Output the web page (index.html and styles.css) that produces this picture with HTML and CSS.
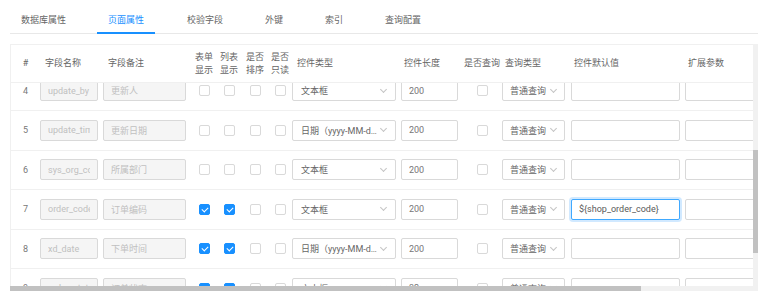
FILE: index.html
```html
<!DOCTYPE html>
<html lang="zh-CN">
<head>
  <meta charset="UTF-8">
  <meta name="viewport" content="width=device-width, initial-scale=1.0">
  <title>页面属性</title>
  <link rel="stylesheet" href="styles.css">
</head>
<body>
  <div class="page">
    <!-- Tabs -->
    <div class="tabs">
      <div class="tab">数据库属性</div>
      <div class="tab active">页面属性</div>
      <div class="tab">校验字段</div>
      <div class="tab">外键</div>
      <div class="tab">索引</div>
      <div class="tab">查询配置</div>
    </div>

    <div class="grid-box">
      <div class="grid-main">
        <!-- Header -->
        <div class="thead">
          <div class="row head">
            <div class="th center">#</div>
            <div class="th">字段名称</div>
            <div class="th">字段备注</div>
            <div class="th center">表单<br>显示</div>
            <div class="th center">列表<br>显示</div>
            <div class="th center">是否<br>排序</div>
            <div class="th center">是否<br>只读</div>
            <div class="th">控件类型</div>
            <div class="th tight">控件长度</div>
            <div class="th center">是否查询</div>
            <div class="th tight">查询类型</div>
            <div class="th tight">控件默认值</div>
            <div class="th tight">扩展参数</div>
          </div>
        </div>

        <!-- Rows -->
        <div class="tbody">
          <div class="rows">
            <div class="row">
              <div class="num">4</div>
              <div><input class="input name" value="update_by" disabled></div>
              <div><input class="input remark" value="更新人" disabled></div>
              <div class="center"><span class="cb"></span></div>
              <div class="center"><span class="cb"></span></div>
              <div class="center"><span class="cb"></span></div>
              <div class="center"><span class="cb"></span></div>
              <div><div class="select type"><span class="val">文本框</span></div></div>
              <div><input class="input len" value="200"></div>
              <div class="center"><span class="cb"></span></div>
              <div><div class="select query"><span class="val">普通查询</span></div></div>
              <div><input class="input wide" value=""></div>
              <div><input class="input wide" value=""></div>
            </div>

            <div class="row">
              <div class="num">5</div>
              <div><input class="input name" value="update_time" disabled></div>
              <div><input class="input remark" value="更新日期" disabled></div>
              <div class="center"><span class="cb"></span></div>
              <div class="center"><span class="cb"></span></div>
              <div class="center"><span class="cb"></span></div>
              <div class="center"><span class="cb"></span></div>
              <div><div class="select type"><span class="val">日期（yyyy-MM-dd）</span></div></div>
              <div><input class="input len" value="200"></div>
              <div class="center"><span class="cb"></span></div>
              <div><div class="select query"><span class="val">普通查询</span></div></div>
              <div><input class="input wide" value=""></div>
              <div><input class="input wide" value=""></div>
            </div>

            <div class="row">
              <div class="num">6</div>
              <div><input class="input name" value="sys_org_code" disabled></div>
              <div><input class="input remark" value="所属部门" disabled></div>
              <div class="center"><span class="cb"></span></div>
              <div class="center"><span class="cb"></span></div>
              <div class="center"><span class="cb"></span></div>
              <div class="center"><span class="cb"></span></div>
              <div><div class="select type"><span class="val">文本框</span></div></div>
              <div><input class="input len" value="200"></div>
              <div class="center"><span class="cb"></span></div>
              <div><div class="select query"><span class="val">普通查询</span></div></div>
              <div><input class="input wide" value=""></div>
              <div><input class="input wide" value=""></div>
            </div>

            <div class="row">
              <div class="num">7</div>
              <div><input class="input name" value="order_code" disabled></div>
              <div><input class="input remark" value="订单编码" disabled></div>
              <div class="center"><span class="cb checked"></span></div>
              <div class="center"><span class="cb checked"></span></div>
              <div class="center"><span class="cb"></span></div>
              <div class="center"><span class="cb"></span></div>
              <div><div class="select type"><span class="val">文本框</span></div></div>
              <div><input class="input len" value="200"></div>
              <div class="center"><span class="cb"></span></div>
              <div><div class="select query"><span class="val">普通查询</span></div></div>
              <div><input class="input wide focused" value="${shop_order_code}"></div>
              <div><input class="input wide" value=""></div>
            </div>

            <div class="row">
              <div class="num">8</div>
              <div><input class="input name" value="xd_date" disabled></div>
              <div><input class="input remark" value="下单时间" disabled></div>
              <div class="center"><span class="cb checked"></span></div>
              <div class="center"><span class="cb checked"></span></div>
              <div class="center"><span class="cb"></span></div>
              <div class="center"><span class="cb"></span></div>
              <div><div class="select type"><span class="val">日期（yyyy-MM-dd）</span></div></div>
              <div><input class="input len" value="200"></div>
              <div class="center"><span class="cb"></span></div>
              <div><div class="select query"><span class="val">普通查询</span></div></div>
              <div><input class="input wide" value=""></div>
              <div><input class="input wide" value=""></div>
            </div>

            <div class="row">
              <div class="num">9</div>
              <div><input class="input name" value="order_status" disabled></div>
              <div><input class="input remark" value="订单状态" disabled></div>
              <div class="center"><span class="cb checked"></span></div>
              <div class="center"><span class="cb checked"></span></div>
              <div class="center"><span class="cb"></span></div>
              <div class="center"><span class="cb"></span></div>
              <div><div class="select type"><span class="val">文本框</span></div></div>
              <div><input class="input len" value="32"></div>
              <div class="center"><span class="cb"></span></div>
              <div><div class="select query"><span class="val">普通查询</span></div></div>
              <div><input class="input wide" value=""></div>
              <div><input class="input wide" value=""></div>
            </div>
          </div>
        </div>

        <!-- Horizontal scrollbar -->
        <div class="hbar"><div class="hthumb"></div></div>
      </div>

      <!-- Vertical scrollbar -->
      <div class="vbar"><div class="vthumb"></div></div>
    </div>
  </div>
</body>
</html>
```

FILE: styles.css
```css
* {
  box-sizing: border-box;
}

body {
  margin: 0;
  background-color: #fff;
  color: #666;
  font-family: Roboto, "Noto Sans CJK SC", sans-serif;
  font-size: 9px;
}

.page {
  padding: 0 4px 0 10px;
}

/* Tabs */
.tabs {
  display: flex;
  padding-left: 1px;
  border-bottom: 1px solid #e8e8e8;
}

.tab {
  padding: 14px 10px 6px;
  margin-right: 22px;
  margin-bottom: -1px;
  line-height: 12px;
  border-bottom: 2px solid transparent;
  color: #666;
}

.tab:first-child {
  margin-right: 21px;
}

.tab.active {
  padding: 14px 11px 6px;
  color: #1890ff;
  border-bottom-color: #1890ff;
}

/* Grid */
.grid-box {
  display: flex;
  margin-top: 10px;
}

.grid-main {
  flex: 1;
  min-width: 0;
}

.thead,
.tbody {
  border-left: 1px solid #f0f0f0;
  overflow: hidden;
}

.thead {
  height: 39px;
  border-top: 1px solid #f0f0f0;
  border-bottom: 1px solid #f0f0f0;
}

.tbody {
  height: 203px;
}

.rows {
  margin-top: -11.5px;
}

.row {
  display: grid;
  grid-template-columns: 29px 63px 89px 24px 26px 26px 24px 109px 61px 40px 69px 114px 120px;
  align-items: center;
  height: 39.5px;
  border-bottom: 1px solid #f0f0f0;
}

.row.head {
  height: 37px;
  border-bottom: none;
}

.th {
  padding-left: 5px;
  line-height: 13px;
  white-space: nowrap;
  color: #666;
}

.th.tight {
  padding-left: 3px;
}

.center {
  display: flex;
  justify-content: center;
  text-align: center;
  padding-left: 0;
}

.num {
  text-align: center;
  color: #777;
}

/* Controls */
.input {
  display: block;
  height: 21px;
  padding: 0 7px;
  border: 1px solid #d9d9d9;
  border-radius: 2px;
  background-color: #fff;
  color: #777;
  font: inherit;
  outline: none;
}

.input:disabled {
  background-color: #f5f5f5;
  color: #c0c0c0;
}

.input.name {
  width: 58px;
}

.input.remark {
  width: 83px;
}

.input.len {
  width: 57px;
}

.input.wide {
  width: 109px;
}

.input.focused {
  border-color: #40a9ff;
  box-shadow: 0 0 0 2px rgba(24, 144, 255, 0.2);
  color: #595959;
}

.select {
  display: flex;
  align-items: center;
  height: 21px;
  padding: 0 9px 0 8px;
  border: 1px solid #d9d9d9;
  border-radius: 2px;
  background-color: #fff;
  color: #666;
}

.select.type {
  width: 104px;
}

.select.query {
  width: 63px;
  padding: 0 8px 0 7px;
}

.select .val {
  flex: 1;
  min-width: 0;
  overflow: hidden;
  white-space: nowrap;
  text-overflow: ellipsis;
}

.select::after {
  content: "";
  flex: none;
  width: 4px;
  height: 4px;
  margin: -3px 0 0 3px;
  border-right: 1px solid #c4c4c4;
  border-bottom: 1px solid #c4c4c4;
  transform: rotate(45deg);
}

.cb {
  position: relative;
  display: block;
  width: 11px;
  height: 11px;
  border: 1px solid #d9d9d9;
  border-radius: 2px;
  background-color: #fff;
}

.cb.checked {
  background-color: #1890ff;
  border-color: #1890ff;
}

.cb.checked::after {
  content: "";
  position: absolute;
  left: 3px;
  top: 1px;
  width: 3px;
  height: 5px;
  border-right: 1.5px solid #fff;
  border-bottom: 1.5px solid #fff;
  transform: rotate(45deg);
}

/* Scrollbars */
.hbar {
  height: 5px;
  background-color: #f1f1f1;
}

.hthumb {
  width: 631px;
  height: 5px;
  background-color: #c1c1c1;
}

.vbar {
  width: 5px;
  height: 247px;
  background-color: #f1f1f1;
}

.vthumb {
  height: 103px;
  margin-top: 106px;
  background-color: #c1c1c1;
}
```
